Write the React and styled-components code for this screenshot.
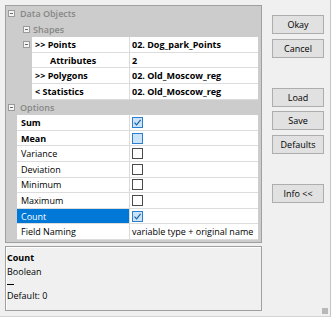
import React from "react";
import styled, { createGlobalStyle } from "styled-components";

const GlobalStyle = createGlobalStyle`
  body {
    margin: 0;
    background: #f0f0f0;
    font-family: "Open Sans", "Noto Sans", sans-serif;
    font-size: 9px;
    color: #000;
  }
`;

const Window = styled.div`
  position: relative;
  box-sizing: border-box;
  width: 331px;
  height: 317px;
  padding: 5px 0 0 5px;
  display: flex;
  background: #f0f0f0;
  border-right: 1px solid #c4c4c4;
  border-bottom: 1px solid #d4d4d4;
`;

const LeftColumn = styled.div`
  display: flex;
  flex-direction: column;
  gap: 3px;
  width: 257px;
`;

const Grid = styled.div`
  box-sizing: border-box;
  height: 238px;
  border: 1px solid #a0a0a0;
  background: #cccccc;
  padding: 0 3px 0 0;
  display: flex;
  flex-direction: column;
`;

const Row = styled.div`
  display: flex;
  height: 15.6px;
  flex-shrink: 0;
`;

const CategoryRow = styled(Row)`
  align-items: center;
  padding-left: ${({ indent }) => indent}px;
  color: #878787;
  font-weight: 600;
  background: #cccccc;
`;

const Expander = styled.span`
  position: relative;
  box-sizing: border-box;
  width: 7px;
  height: 7px;
  margin-right: ${({ gap }) => gap}px;
  border: 1px solid #9a9a9a;
  background: #f4f4f4;
  flex-shrink: 0;

  &::after {
    content: "";
    position: absolute;
    left: 1px;
    right: 1px;
    top: 2px;
    height: 1px;
    background: #6a6a6a;
  }
`;

const Margin = styled.div`
  width: ${({ width }) => width}px;
  flex-shrink: 0;
  display: flex;
  align-items: center;
  justify-content: flex-end;
  padding-right: 2px;
  box-sizing: border-box;
`;

const NameCell = styled.div`
  flex: 1;
  display: flex;
  align-items: center;
  padding-left: ${({ pad }) => pad}px;
  background: ${({ selected }) => (selected ? "#0078d7" : "#ffffff")};
  color: ${({ selected }) => (selected ? "#ffffff" : "#000000")};
  font-weight: ${({ bold }) => (bold ? 700 : 400)};
  white-space: nowrap;
  overflow: hidden;
  border-right: 1px solid #dadada;
  border-bottom: 1px solid #dcdcdc;
`;

const ValueCell = styled.div`
  width: 128px;
  flex-shrink: 0;
  display: flex;
  align-items: center;
  padding-left: 2px;
  box-sizing: border-box;
  background: #ffffff;
  font-weight: ${({ bold }) => (bold ? 700 : 400)};
  white-space: nowrap;
  overflow: hidden;
  border-bottom: 1px solid #dcdcdc;
`;

const Box = styled.span`
  box-sizing: border-box;
  width: 11px;
  height: 11px;
  display: flex;
  align-items: center;
  justify-content: center;
  border: 1px solid ${({ tone }) => (tone === "plain" ? "#4a4a4a" : "#2c7fd0")};
  background: ${({ tone }) => (tone === "plain" ? "#ffffff" : "#cce4f7")};
`;

const HelpPanel = styled.div`
  box-sizing: border-box;
  height: 65px;
  border: 1px solid #a0a0a0;
  box-shadow: inset 1px 1px 0 #ffffff;
  padding: 4px 0 0 1px;
  display: flex;
  flex-direction: column;
`;

const HelpTitle = styled.div`
  font-weight: 700;
  line-height: 14px;
`;

const HelpLine = styled.div`
  line-height: 14px;
`;

const HelpRule = styled.div`
  width: 7px;
  margin: 5px 0 4px;
  border-top: 1px solid #000;
`;

const ButtonColumn = styled.div`
  display: flex;
  flex-direction: column;
  gap: 30px;
  margin-left: 10px;
  padding-top: 5px;
`;

const ButtonGroup = styled.div`
  display: flex;
  flex-direction: column;
  gap: 4.5px;

  &:first-child {
    margin-top: 5px;
  }
`;

const Button = styled.button`
  box-sizing: border-box;
  width: 52px;
  height: 19px;
  padding: 0;
  border: 1px solid #adadad;
  background: #e1e1e1;
  font-family: inherit;
  font-size: 9px;
  color: #000;
`;

const Grip = styled.div`
  position: absolute;
  right: 2px;
  bottom: 2px;
  width: 6px;
  height: 6px;
  background-image: radial-gradient(#b8b8b8 0.8px, transparent 1px);
  background-size: 2px 2px;
`;

const Check = ({ tone, checked }) => (
  <Box tone={tone}>
    {checked && (
      <svg width="9" height="9" viewBox="0 0 9 9">
        <path d="M1.5 4.6 L3.6 6.8 L7.6 1.8" fill="none" stroke="#1a5fa8" strokeWidth="1.2" />
      </svg>
    )}
  </Box>
);

const shapeRows = [
  { name: ">> Points", value: "02. Dog_park_Points", expander: true, pad: 3 },
  { name: "Attributes", value: "2", pad: 18 },
  { name: ">> Polygons", value: "02. Old_Moscow_reg", pad: 3 },
  { name: "< Statistics", value: "02. Old_Moscow_reg", pad: 3 },
];

const optionRows = [
  { name: "Sum", bold: true, check: "blue", checked: true },
  { name: "Mean", bold: true, check: "blue" },
  { name: "Variance", check: "plain" },
  { name: "Deviation", check: "plain" },
  { name: "Minimum", check: "plain" },
  { name: "Maximum", check: "plain" },
  { name: "Count", check: "blue", checked: true, selected: true },
  { name: "Field Naming", value: "variable type + original name" },
];

export default function App() {
  return (
    <>
      <GlobalStyle />
      <Window>
        <LeftColumn>
          <Grid>
            <CategoryRow indent={2}>
              <Expander gap={5} />
              Data Objects
            </CategoryRow>
            <CategoryRow indent={17}>
              <Expander gap={3} />
              Shapes
            </CategoryRow>
            {shapeRows.map((r) => (
              <Row key={r.name}>
                <Margin width={26}>{r.expander && <Expander gap={0} />}</Margin>
                <NameCell pad={r.pad} bold>
                  {r.name}
                </NameCell>
                <ValueCell bold>{r.value}</ValueCell>
              </Row>
            ))}
            <CategoryRow indent={2}>
              <Expander gap={5} />
              Options
            </CategoryRow>
            {optionRows.map((r) => (
              <Row key={r.name}>
                <Margin width={11} />
                <NameCell pad={4} bold={r.bold} selected={r.selected}>
                  {r.name}
                </NameCell>
                <ValueCell>
                  {r.check ? <Check tone={r.check} checked={r.checked} /> : r.value}
                </ValueCell>
              </Row>
            ))}
          </Grid>
          <HelpPanel>
            <HelpTitle>Count</HelpTitle>
            <HelpLine>Boolean</HelpLine>
            <HelpRule />
            <HelpLine>Default: 0</HelpLine>
          </HelpPanel>
        </LeftColumn>
        <ButtonColumn>
          <ButtonGroup>
            <Button>Okay</Button>
            <Button>Cancel</Button>
          </ButtonGroup>
          <ButtonGroup>
            <Button>Load</Button>
            <Button>Save</Button>
            <Button>Defaults</Button>
          </ButtonGroup>
          <ButtonGroup>
            <Button>Info &lt;&lt;</Button>
          </ButtonGroup>
        </ButtonColumn>
        <Grip />
      </Window>
    </>
  );
}
